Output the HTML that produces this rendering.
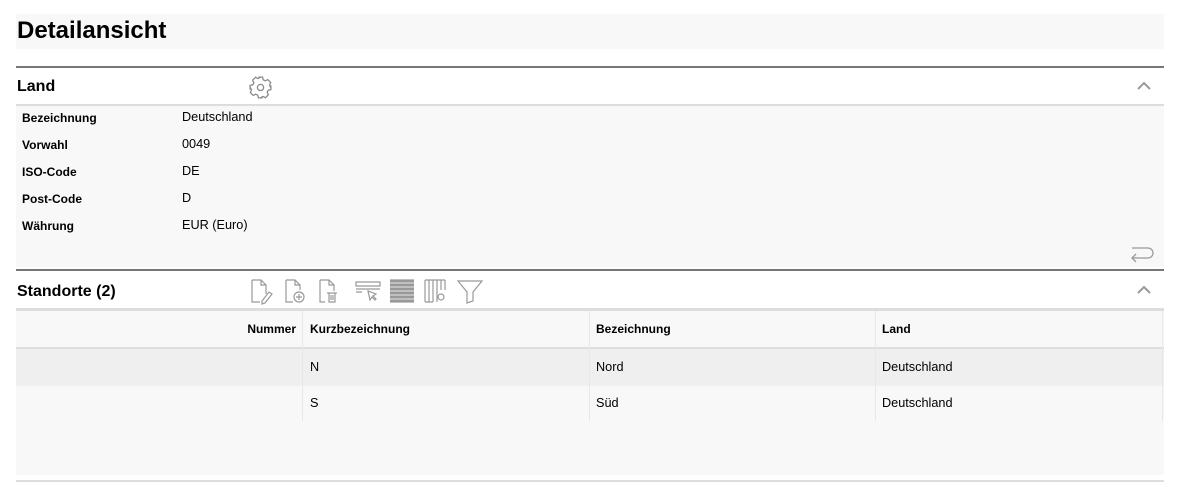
<!DOCTYPE html>
<html><head><meta charset="utf-8"><style>
*{margin:0;padding:0;box-sizing:border-box}
body{width:1180px;height:487px;background:#fff;font-family:"Liberation Sans",Arial,sans-serif;color:#000;position:relative;overflow:hidden}
.a{position:absolute}
.t{font-size:12.7px;white-space:nowrap}
.b{font-weight:bold;font-size:12px}
</style></head><body>
<div class="a" style="left:16px;top:14px;width:1148px;height:35px;background:#f8f8f8"></div>
<div class="a" style="left:17px;top:17px;font-size:24px;font-weight:bold">Detailansicht</div>

<div class="a" style="left:16px;top:66px;width:1148px;height:2px;background:#777"></div>
<div class="a" style="left:17px;top:78px;font-size:16px;font-weight:bold">Land</div>
<svg class="a" style="left:248px;top:75px" width="25" height="25" viewBox="0 0 24 24" fill="none" stroke="#888" stroke-width="1.2"><path d="M10 2h4l.6 2.6 2 1 2.4-1.2 2.8 2.8-1.2 2.4 1 2L22 10v4l-2.6.6-1 2 1.2 2.4-2.8 2.8-2.4-1.2-2 1L14 22h-4l-.6-2.6-2-1-2.4 1.2-2.8-2.8 1.2-2.4-1-2L2 14v-4l2.6-.6 1-2L4.4 5l2.8-2.8 2.4 1.2 2-1z"/><circle cx="12" cy="12" r="3"/></svg>
<svg class="a" style="left:1136px;top:80px" width="16" height="12" viewBox="0 0 16 12" fill="none" stroke="#999" stroke-width="2"><path d="M2 9l6-6 6 6"/></svg>
<div class="a" style="left:16px;top:104px;width:1148px;height:2px;background:#ddd"></div>
<div class="a" style="left:16px;top:106px;width:1148px;height:161px;background:#f8f8f8"></div>
<div class="a t b" style="left:22px;top:111px">Bezeichnung</div><div class="a t" style="left:182px;top:110px">Deutschland</div>
<div class="a t b" style="left:22px;top:138px">Vorwahl</div><div class="a t" style="left:182px;top:137px">0049</div>
<div class="a t b" style="left:22px;top:165px">ISO-Code</div><div class="a t" style="left:182px;top:164px">DE</div>
<div class="a t b" style="left:22px;top:192px">Post-Code</div><div class="a t" style="left:182px;top:191px">D</div>
<div class="a t b" style="left:22px;top:219px">Währung</div><div class="a t" style="left:182px;top:218px">EUR (Euro)</div>
<svg class="a" style="left:1128px;top:242px" width="28" height="22" viewBox="0 0 28 22" fill="none" stroke="#999" stroke-width="1.3"><path d="M4 6h16a5 5 0 0 1 0 10H4M8 12l-4 4 4 4"/></svg>

<div class="a" style="left:16px;top:269px;width:1148px;height:2px;background:#777"></div>
<div class="a" style="left:17px;top:283px;font-size:16px;font-weight:bold">Standorte (2)</div>
<svg class="a" style="left:250px;top:277px" width="236" height="28" viewBox="0 0 236 28" fill="none" stroke="#999" stroke-width="1.2">
<path d="M2 3h9l5 5v9M2 3v22h8M11 3v5h5M12 24l7-9 3 2-7 9-3 1z"/>
<path d="M36 3h9l5 5v5M36 3v22h7M45 3v5h5"/><circle cx="49" cy="20" r="5"/><path d="M49 17v6M46 20h6"/>
<path d="M70 3h9l5 5v6M70 3v22h5M79 3v5h5M77 16h10M79 16v9h6v-9M81 18v5M83 18v5"/>
<path d="M106 5h24v4h-24zM106 12h24M106 15h6"/><path d="M118 14l2 9 2-3 3 3 1-1-3-3 3-2z"/>
<path d="M140 4h24M140 8h24M140 12h24M140 16h24M140 20h24M140 24h24" stroke="#999" stroke-width="3.2"/>
<path d="M175 3v22M179 3v22M183 3v22M187 3v22M191 3v10M195 3v10M175 3h20M175 25h8"/><circle cx="191" cy="20" r="3"/>
<path d="M208 4h24l-9 11v9l-6 2v-11z"/>
</svg>
<svg class="a" style="left:1136px;top:284px" width="16" height="12" viewBox="0 0 16 12" fill="none" stroke="#999" stroke-width="2"><path d="M2 9l6-6 6 6"/></svg>
<div class="a" style="left:16px;top:308px;width:1148px;height:3px;background:#ddd"></div>
<div class="a" style="left:16px;top:311px;width:1148px;height:164px;background:#f8f8f8"></div>
<div class="a" style="left:16px;top:347px;width:1148px;height:2px;background:#ddd"></div>
<div class="a" style="left:16px;top:349px;width:1148px;height:37px;background:#efefef"></div>
<div class="a" style="left:302px;top:311px;width:1px;height:110px;background:#e8e8e8"></div>
<div class="a" style="left:589px;top:311px;width:1px;height:110px;background:#e8e8e8"></div>
<div class="a" style="left:875px;top:311px;width:1px;height:110px;background:#e8e8e8"></div>
<div class="a" style="left:1162px;top:311px;width:1px;height:110px;background:#e8e8e8"></div>
<div class="a t b" style="left:200px;width:96px;text-align:right;top:322px">Nummer</div>
<div class="a t b" style="left:310px;top:322px">Kurzbezeichnung</div>
<div class="a t b" style="left:596px;top:322px">Bezeichnung</div>
<div class="a t b" style="left:882px;top:322px">Land</div>
<div class="a t" style="left:310px;top:360px">N</div><div class="a t" style="left:596px;top:360px">Nord</div><div class="a t" style="left:882px;top:360px">Deutschland</div>
<div class="a t" style="left:310px;top:396px">S</div><div class="a t" style="left:596px;top:396px">Süd</div><div class="a t" style="left:882px;top:396px">Deutschland</div>
<div class="a" style="left:16px;top:480px;width:1148px;height:2px;background:#ddd"></div>
</body></html>
